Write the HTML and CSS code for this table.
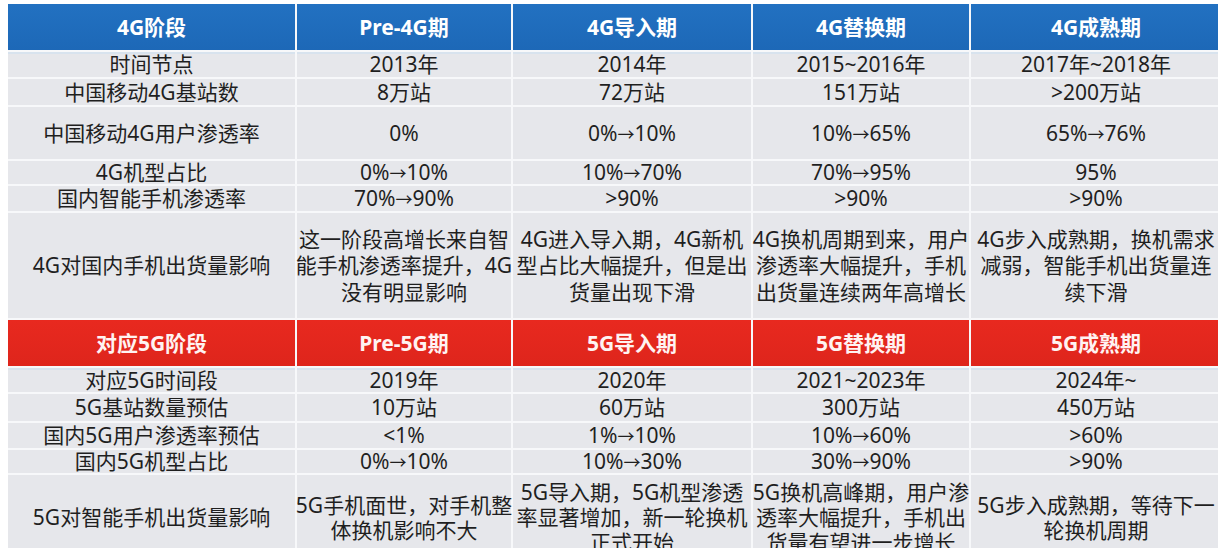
FILE: index.html
```html
<!DOCTYPE html>
<html lang="zh-CN">
<head>
<meta charset="utf-8">
<title>4G / 5G 阶段对比</title>
<link rel="stylesheet" href="styles.css">
</head>
<body>
<div class="page">
  <div class="tbl">
    <div class="c hb">4G阶段</div>
    <div class="c hb">Pre-4G期</div>
    <div class="c hb">4G导入期</div>
    <div class="c hb">4G替换期</div>
    <div class="c hb">4G成熟期</div>

    <div class="c top">时间节点</div>
    <div class="c top">2013年</div>
    <div class="c top">2014年</div>
    <div class="c top">2015~2016年</div>
    <div class="c top">2017年~2018年</div>

    <div class="c">中国移动4G基站数</div>
    <div class="c">8万站</div>
    <div class="c">72万站</div>
    <div class="c">151万站</div>
    <div class="c">&gt;200万站</div>

    <div class="c">中国移动4G用户渗透率</div>
    <div class="c">0%</div>
    <div class="c">0%<span class="ar">→</span>10%</div>
    <div class="c">10%<span class="ar">→</span>65%</div>
    <div class="c">65%<span class="ar">→</span>76%</div>

    <div class="c">4G机型占比</div>
    <div class="c">0%<span class="ar">→</span>10%</div>
    <div class="c">10%<span class="ar">→</span>70%</div>
    <div class="c">70%<span class="ar">→</span>95%</div>
    <div class="c">95%</div>

    <div class="c">国内智能手机渗透率</div>
    <div class="c">70%<span class="ar">→</span>90%</div>
    <div class="c">&gt;90%</div>
    <div class="c">&gt;90%</div>
    <div class="c">&gt;90%</div>

    <div class="c">4G对国内手机出货量影响</div>
    <div class="c m4">这一阶段高增长来自智<br>能手机渗透率提升，4G<br>没有明显影响</div>
    <div class="c m4">4G进入导入期，4G新机<br>型占比大幅提升，但是出<br>货量出现下滑</div>
    <div class="c m4">4G换机周期到来，用户<br>渗透率大幅提升，手机<br>出货量连续两年高增长</div>
    <div class="c m4">4G步入成熟期，换机需求<br>减弱，智能手机出货量连<br>续下滑</div>

    <div class="c hr">对应5G阶段</div>
    <div class="c hr">Pre-5G期</div>
    <div class="c hr">5G导入期</div>
    <div class="c hr">5G替换期</div>
    <div class="c hr">5G成熟期</div>

    <div class="c top">对应5G时间段</div>
    <div class="c top">2019年</div>
    <div class="c top">2020年</div>
    <div class="c top">2021~2023年</div>
    <div class="c top">2024年~</div>

    <div class="c">5G基站数量预估</div>
    <div class="c">10万站</div>
    <div class="c">60万站</div>
    <div class="c">300万站</div>
    <div class="c">450万站</div>

    <div class="c">国内5G用户渗透率预估</div>
    <div class="c">&lt;1%</div>
    <div class="c">1%<span class="ar">→</span>10%</div>
    <div class="c">10%<span class="ar">→</span>60%</div>
    <div class="c">&gt;60%</div>

    <div class="c">国内5G机型占比</div>
    <div class="c">0%<span class="ar">→</span>10%</div>
    <div class="c">10%<span class="ar">→</span>30%</div>
    <div class="c">30%<span class="ar">→</span>90%</div>
    <div class="c">&gt;90%</div>

    <div class="c">5G对智能手机出货量影响</div>
    <div class="c m5">5G手机面世，对手机整<br>体换机影响不大</div>
    <div class="c m5">5G导入期，5G机型渗透<br>率显著增加，新一轮换机<br>正式开始</div>
    <div class="c m5">5G换机高峰期，用户渗<br>透率大幅提升，手机出<br>货量有望进一步增长</div>
    <div class="c m5">5G步入成熟期，等待下一<br>轮换机周期</div>
  </div>
</div>
</body>
</html>
```

FILE: styles.css
```css
html, body {
  margin: 0;
  padding: 0;
  background: #ffffff;
}

.page {
  width: 1218px;
  height: 548px;
  overflow: hidden;
  padding: 4px 0 0 8px;
  box-sizing: border-box;
  font-family: "Noto Sans", "Noto Sans CJK SC", sans-serif;
  font-size: 21px;
  color: #1f1f1f;
}

.tbl {
  display: grid;
  grid-template-columns: 287px 214px 238px 216px 250px;
  grid-template-rows: 46px 25px 26px 52px 23px 25px 105px 46px 24px 27px 25px 23px 85px;
  column-gap: 2px;
  row-gap: 2px;
  background: #f7f8fa;
  width: max-content;
}

.c {
  background: #e6e7eb;
  display: flex;
  align-items: center;
  justify-content: center;
  text-align: center;
  white-space: nowrap;
  line-height: 1;
}

.ar {
  font-family: "Noto Sans CJK SC", sans-serif;
  font-size: 17px;
}

.top {
  box-shadow: inset 0 2px 0 #d8e3ee;
}

.hb {
  background: linear-gradient(#2271c1, #1d68b7);
  color: #ffffff;
  font-weight: 700;
}

.hr {
  background: linear-gradient(#e8291f, #de251c);
  color: #fff3f2;
  font-weight: 700;
}

.m4 {
  line-height: 26.5px;
}

.m5 {
  line-height: 25px;
}
```
